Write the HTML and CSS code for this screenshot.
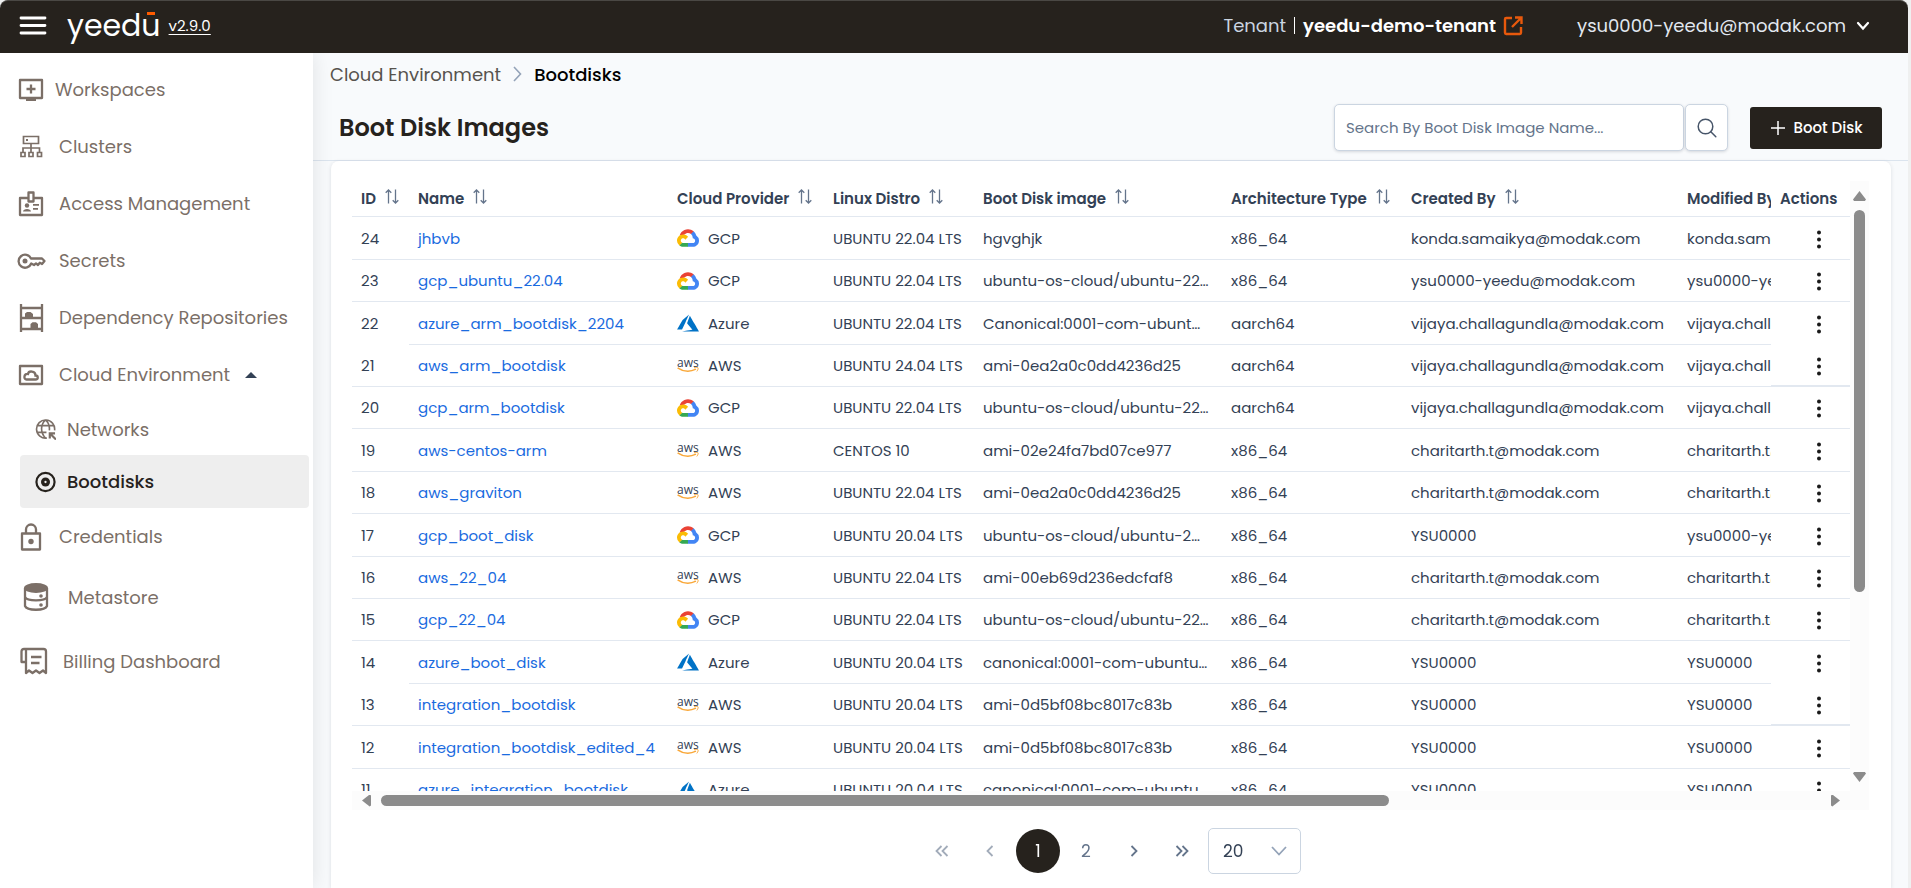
FILE: index.html
```html
<!DOCTYPE html>
<html lang="en">
<head>
<meta charset="utf-8">
<title>Boot Disk Images</title>
<link rel="stylesheet" href="styles.css">
</head>
<body>
<svg class="sprite" aria-hidden="true">
  <symbol id="gcp" viewBox="0 0 256 206"><path fill="#ea4335" d="M170.252 56.819l22.253-22.253 1.483-9.37C153.437-11.677 88.976-7.496 52.42 33.92 42.267 45.423 34.734 59.764 30.717 74.573l7.97-1.123 44.505-7.34 3.436-3.513c19.797-21.742 53.27-24.667 76.128-6.168z"/><path fill="#4285f4" d="M224.205 73.918a100.249 100.249 0 0 0-30.217-48.722l-31.232 31.232a55.515 55.515 0 0 1 20.379 44.037v5.544c15.35 0 27.797 12.445 27.797 27.796 0 15.352-12.446 27.485-27.797 27.485h-55.671l-5.466 5.934v33.34l5.466 5.231h55.67c39.93.311 72.553-31.494 72.864-71.424a72.303 72.303 0 0 0-31.793-60.453"/><path fill="#34a853" d="M71.87 205.796h55.593V161.29H71.87a27.275 27.275 0 0 1-11.4-2.498l-7.887 2.42-22.409 22.253-1.952 7.574c12.567 9.489 27.9 14.825 43.647 14.757"/><path fill="#fbbc05" d="M71.87 61.425C31.94 61.664-.237 94.228.001 134.158a72.301 72.301 0 0 0 28.222 56.88l32.248-32.246c-13.99-6.322-20.208-22.786-13.887-36.776 6.32-13.99 22.786-20.208 36.775-13.888a27.796 27.796 0 0 1 13.887 13.888l32.248-32.248A72.224 72.224 0 0 0 71.87 61.425"/></symbol>
  <symbol id="azure" viewBox="0 0 256 199"><path fill="#0072c6" d="M118.432 187.698c32.89-5.81 60.055-10.618 60.367-10.684l.568-.12-31.052-36.935c-17.078-20.314-31.051-37.014-31.051-37.11 0-.182 32.063-88.477 32.243-88.792.06-.105 21.88 37.567 52.893 91.32 29.035 50.323 52.973 91.815 53.195 92.203l.405.707-98.684-.012-98.684-.013zM0 176.435c0-.052 14.631-25.451 32.514-56.442l32.514-56.347 37.891-31.799C123.76 14.358 140.867.027 140.935.001c.069-.026-.205.664-.609 1.534-.404.87-18.919 40.582-41.145 88.25l-40.41 86.67-29.386.037z"/></symbol>
  <symbol id="smile" viewBox="0 0 22 6"><path d="M.6.8C6.500 4.900 13.500 4.900 19 2.200" fill="none" stroke="#f9a83a" stroke-width="1.500"/><path d="M17 .8c2-.5 3.600-.4 4 0s0 2.200-1.200 3.600" fill="none" stroke="#f9a83a" stroke-width="1"/></symbol>
  <symbol id="sort" viewBox="0 0 14 15"><path d="M3.500 14.500V1M.7 3.700 3.500 1l2.800 2.700M10.500.5V14M7.700 11.300l2.800 2.700 2.800-2.700" fill="none" stroke="currentColor" stroke-width="1.300"/></symbol>
  <symbol id="dots" viewBox="0 0 4 19"><circle cx="2" cy="2.500" r="2"/><circle cx="2" cy="9.500" r="2"/><circle cx="2" cy="16.500" r="2"/></symbol>
</svg>

<div class="app">
  <header class="topbar">
    <button class="menu" aria-label="Toggle menu"><svg width="28" height="20" viewBox="0 0 28 20"><path d="M2 2h24M2 9.500h24M2 17h24" stroke="#fff" stroke-width="2.800" stroke-linecap="round"/></svg></button>
    <a class="brand" href="#">yeedu</a>
    <a class="version" href="#">v2.9.0</a>
    <div class="tenant">
      <span class="tenant-label">Tenant</span>
      <strong class="tenant-name">yeedu-demo-tenant</strong>
      <button class="switch" aria-label="Switch tenant"><svg width="20" height="20" viewBox="0 0 20 20" fill="none" stroke="#e8590c" stroke-width="2.400"><path d="M9 2H3.200C2.500 2 2 2.500 2 3.200v13.600c0 .7.500 1.200 1.200 1.200h13.600c.7 0 1.200-.5 1.200-1.200V11M12 1.500h6.500V8M18 2 9 11"/></svg></button>
    </div>
    <button class="user">ysu0000-yeedu@modak.com<svg width="14" height="10" viewBox="0 0 14 10"><path d="m2 2 5 5.500L12 2" fill="none" stroke="#fff" stroke-width="2.200" stroke-linecap="round"/></svg></button>
  </header>

  <div class="body">
    <nav class="side" aria-label="Main">
      <a class="item snug" href="#"><svg class="ico" viewBox="0 0 26 26"><path d="M2 3h22v18H2z" class="l" stroke-linejoin="round"/><path d="M8 22h10v2H8z" class="f"/><path d="M13 7.500v9M8.500 12h9" class="l"/></svg>Workspaces</a>
      <a class="item" href="#"><svg class="ico" viewBox="0 0 26 26"><path class="t" d="M5.500 2.500h15v7h-15zM3 18.500h4v4H3zM11 18.500h4v4h-4zM19.500 18.500h4v4h-4zM13 10v8M5 18v-4h16.500v4"/><path class="f" d="M8 5h2v2H8z"/></svg>Clusters</a>
      <a class="item" href="#"><svg class="ico" viewBox="0 0 26 26"><path class="l" stroke-linejoin="round" d="M10 7H2v17h22V7h-8M10.500 1.500h5v9h-5z"/><circle class="f" cx="9" cy="14.500" r="2.200"/><path class="f" d="M5 20.500c0-3.500 8-3.500 8 0zM15 13h6v1.700h-6zM15 17h5v1.700h-5z"/></svg>Access Management</a>
      <a class="item" href="#"><svg class="ico wide" viewBox="0 0 29 26"><path class="l" stroke-linejoin="round" d="M14 10.500h11L27.500 13l-2.500 3-2.200-1.200L21 17l-2-1.600-2 1.600-2.800-1.500A6.500 6.500 0 1 1 14 10.500z"/><circle class="f" cx="8" cy="13" r="2.500"/></svg>Secrets</a>
      <a class="item" href="#"><svg class="ico" viewBox="0 0 26 28"><path class="l" d="M3 0v28M24 0v28M3 4h21M3 14h21M3 25h21"/><path class="f" d="M7 14V9.500L9 8h3.500L15 10v4zM12.500 24v-4l2-1.800h3.500l2 1.800v4z"/></svg>Dependency Repositories</a>
      <a class="item" href="#" aria-expanded="true"><svg class="ico" viewBox="0 0 26 26"><path class="l" stroke-linejoin="round" d="M2 4h22v18H2z"/><path class="l" d="M8.500 17.500h9c3 0 3-4 0-4 0-5-7-5-7.500-1.500-4.500-.5-4.500 5.500-1.500 5.500z"/></svg>Cloud Environment<svg class="caret" width="12" height="6" viewBox="0 0 12 6"><path d="M6 0 12 6H0z" fill="#334155"/></svg></a>
      <a class="item sub" href="#"><svg class="ico" viewBox="0 0 22 22"><path class="t" d="M12.500 20.500A9.500 9.500 0 1 1 20.500 12.500M2 7.500h18M2 14.500h10M11 1.500c-5.500 5-5.500 13 0 19M11 1.500c3.500 3 4.500 7 4 11"/><path class="l" d="m22 22-5.500-5.500M15.500 21v-5.500H21"/></svg>Networks</a>
      <a class="item sub active" href="#" aria-current="page"><svg class="ico" viewBox="0 0 22 22"><circle class="l" cx="11" cy="11" r="9.500"/><circle class="f" cx="11" cy="11" r="4.700"/><circle cx="11" cy="11" r="1.200" fill="#eee"/></svg>Bootdisks</a>
      <a class="item" href="#"><svg class="ico" viewBox="0 0 26 28"><path class="l" stroke-linejoin="round" d="M4 10.500h18v16H4zM8 11V6.500a5 5 0 0 1 10 0V11"/><circle class="f" cx="13" cy="18.500" r="2.700"/></svg>Credentials</a>
      <a class="item tall meta" href="#"><svg class="ico big" viewBox="0 0 26 30"><ellipse class="f" cx="13" cy="6" rx="12" ry="5"/><path class="l" d="M2 6v18c2 5 20 5 22 0V6M2 15c2 4.500 20 4.500 22 0"/><circle class="f" cx="18" cy="14" r="1.800"/><circle class="f" cx="18" cy="23" r="1.800"/></svg>Metastore</a>
      <a class="item tall bill" href="#"><svg class="ico big" viewBox="0 0 28 28"><path class="l" stroke-linejoin="round" d="M6 2h17.500c1.500 0 2.500 1 2.500 2.500V26l-3-2.500-3.500 2.500-3.500-2.500-3.500 2.500-3.500-2.500L6 26zM6 2H4C2.500 2 1.500 3 1.500 4.500V15H6M11 10h10.500M11 16h8.500"/></svg>Billing Dashboard</a>
    </nav>

    <main class="main">
      <div class="pagehead">
        <nav class="crumbs" aria-label="Breadcrumb"><a href="#">Cloud Environment</a><svg width="9" height="16" viewBox="0 0 9 16"><path d="m1 1 6.500 7L1 15" fill="none" stroke="#94a3b8" stroke-width="1.600"/></svg><span aria-current="page">Bootdisks</span></nav>
        <div class="titlebar">
          <h1>Boot Disk Images</h1>
          <form class="search" role="search">
            <input type="text" aria-label="Search by boot disk image name" placeholder="Search By Boot Disk Image Name...">
            <button type="button" aria-label="Search"><svg width="20" height="20" viewBox="0 0 20 20"><circle cx="8.500" cy="8.500" r="7.300" fill="none" stroke="#475569" stroke-width="1.500"/><path d="m13.800 13.800 5 5" stroke="#475569" stroke-width="1.500" stroke-linecap="round"/></svg></button>
          </form>
          <button class="add"><svg width="16" height="16" viewBox="0 0 16 16"><path d="M8 1v14M1 8h14" stroke="#fff" stroke-width="1.500"/></svg>Boot Disk</button>
        </div>
      </div>

      <section class="card">
        <div class="grid">
          <div class="scroller">
            <table>
              <colgroup><col class="c-id"><col class="c-name"><col class="c-cloud"><col class="c-distro"><col class="c-image"><col class="c-arch"><col class="c-by"><col class="c-by"><col class="c-act"></colgroup>
              <thead>
                <tr><th class="pin-l">ID<svg><use href="#sort"/></svg></th><th>Name<svg><use href="#sort"/></svg></th><th>Cloud Provider<svg><use href="#sort"/></svg></th><th>Linux Distro<svg><use href="#sort"/></svg></th><th>Boot Disk image<svg><use href="#sort"/></svg></th><th>Architecture Type<svg><use href="#sort"/></svg></th><th>Created By<svg><use href="#sort"/></svg></th><th>Modified By<svg><use href="#sort"/></svg></th><th class="pin-r">Actions</th></tr>
              </thead>
              <tbody>
                <tr><td class="pin-l">24</td><td><a href="#">jhbvb</a></td><td><span class="cloud"><svg><use href="#gcp"/></svg>GCP</span></td><td>UBUNTU 22.04 LTS</td><td>hgvghjk</td><td>x86_64</td><td>konda.samaikya@modak.com</td><td>konda.samaikya@modak.com</td><td class="pin-r"><button aria-label="Actions for 24"><svg><use href="#dots"/></svg></button></td></tr>
                <tr><td class="pin-l">23</td><td><a href="#">gcp_ubuntu_22.04</a></td><td><span class="cloud"><svg><use href="#gcp"/></svg>GCP</span></td><td>UBUNTU 22.04 LTS</td><td>ubuntu-os-cloud/ubuntu-22…</td><td>x86_64</td><td>ysu0000-yeedu@modak.com</td><td>ysu0000-yeedu@modak.com</td><td class="pin-r"><button aria-label="Actions for 23"><svg><use href="#dots"/></svg></button></td></tr>
                <tr class="joined"><td class="pin-l">22</td><td><a href="#">azure_arm_bootdisk_2204</a></td><td><span class="cloud"><svg><use href="#azure"/></svg>Azure</span></td><td>UBUNTU 22.04 LTS</td><td>Canonical:0001-com-ubunt…</td><td>aarch64</td><td>vijaya.challagundla@modak.com</td><td>vijaya.challagundla@modak.com</td><td class="pin-r"><button aria-label="Actions for 22"><svg><use href="#dots"/></svg></button></td></tr>
                <tr><td class="pin-l">21</td><td><a href="#">aws_arm_bootdisk</a></td><td><span class="cloud"><span class="aws">aws<svg><use href="#smile"/></svg></span>AWS</span></td><td>UBUNTU 24.04 LTS</td><td>ami-0ea2a0c0dd4236d25</td><td>aarch64</td><td>vijaya.challagundla@modak.com</td><td>vijaya.challagundla@modak.com</td><td class="pin-r"><button aria-label="Actions for 21"><svg><use href="#dots"/></svg></button></td></tr>
                <tr><td class="pin-l">20</td><td><a href="#">gcp_arm_bootdisk</a></td><td><span class="cloud"><svg><use href="#gcp"/></svg>GCP</span></td><td>UBUNTU 22.04 LTS</td><td>ubuntu-os-cloud/ubuntu-22…</td><td>aarch64</td><td>vijaya.challagundla@modak.com</td><td>vijaya.challagundla@modak.com</td><td class="pin-r"><button aria-label="Actions for 20"><svg><use href="#dots"/></svg></button></td></tr>
                <tr><td class="pin-l">19</td><td><a href="#">aws-centos-arm</a></td><td><span class="cloud"><span class="aws">aws<svg><use href="#smile"/></svg></span>AWS</span></td><td>CENTOS 10</td><td>ami-02e24fa7bd07ce977</td><td>x86_64</td><td>charitarth.t@modak.com</td><td>charitarth.t@modak.com</td><td class="pin-r"><button aria-label="Actions for 19"><svg><use href="#dots"/></svg></button></td></tr>
                <tr><td class="pin-l">18</td><td><a href="#">aws_graviton</a></td><td><span class="cloud"><span class="aws">aws<svg><use href="#smile"/></svg></span>AWS</span></td><td>UBUNTU 22.04 LTS</td><td>ami-0ea2a0c0dd4236d25</td><td>x86_64</td><td>charitarth.t@modak.com</td><td>charitarth.t@modak.com</td><td class="pin-r"><button aria-label="Actions for 18"><svg><use href="#dots"/></svg></button></td></tr>
                <tr><td class="pin-l">17</td><td><a href="#">gcp_boot_disk</a></td><td><span class="cloud"><svg><use href="#gcp"/></svg>GCP</span></td><td>UBUNTU 20.04 LTS</td><td>ubuntu-os-cloud/ubuntu-2…</td><td>x86_64</td><td>YSU0000</td><td>ysu0000-yeedu@modak.com</td><td class="pin-r"><button aria-label="Actions for 17"><svg><use href="#dots"/></svg></button></td></tr>
                <tr><td class="pin-l">16</td><td><a href="#">aws_22_04</a></td><td><span class="cloud"><span class="aws">aws<svg><use href="#smile"/></svg></span>AWS</span></td><td>UBUNTU 22.04 LTS</td><td>ami-00eb69d236edcfaf8</td><td>x86_64</td><td>charitarth.t@modak.com</td><td>charitarth.t@modak.com</td><td class="pin-r"><button aria-label="Actions for 16"><svg><use href="#dots"/></svg></button></td></tr>
                <tr><td class="pin-l">15</td><td><a href="#">gcp_22_04</a></td><td><span class="cloud"><svg><use href="#gcp"/></svg>GCP</span></td><td>UBUNTU 22.04 LTS</td><td>ubuntu-os-cloud/ubuntu-22…</td><td>x86_64</td><td>charitarth.t@modak.com</td><td>charitarth.t@modak.com</td><td class="pin-r"><button aria-label="Actions for 15"><svg><use href="#dots"/></svg></button></td></tr>
                <tr class="joined"><td class="pin-l">14</td><td><a href="#">azure_boot_disk</a></td><td><span class="cloud"><svg><use href="#azure"/></svg>Azure</span></td><td>UBUNTU 20.04 LTS</td><td>canonical:0001-com-ubuntu…</td><td>x86_64</td><td>YSU0000</td><td>YSU0000</td><td class="pin-r"><button aria-label="Actions for 14"><svg><use href="#dots"/></svg></button></td></tr>
                <tr><td class="pin-l">13</td><td><a href="#">integration_bootdisk</a></td><td><span class="cloud"><span class="aws">aws<svg><use href="#smile"/></svg></span>AWS</span></td><td>UBUNTU 20.04 LTS</td><td>ami-0d5bf08bc8017c83b</td><td>x86_64</td><td>YSU0000</td><td>YSU0000</td><td class="pin-r"><button aria-label="Actions for 13"><svg><use href="#dots"/></svg></button></td></tr>
                <tr><td class="pin-l">12</td><td><a href="#">integration_bootdisk_edited_4</a></td><td><span class="cloud"><span class="aws">aws<svg><use href="#smile"/></svg></span>AWS</span></td><td>UBUNTU 20.04 LTS</td><td>ami-0d5bf08bc8017c83b</td><td>x86_64</td><td>YSU0000</td><td>YSU0000</td><td class="pin-r"><button aria-label="Actions for 12"><svg><use href="#dots"/></svg></button></td></tr>
                <tr><td class="pin-l">11</td><td><a href="#">azure_integration_bootdisk</a></td><td><span class="cloud"><svg><use href="#azure"/></svg>Azure</span></td><td>UBUNTU 20.04 LTS</td><td>canonical:0001-com-ubuntu…</td><td>x86_64</td><td>YSU0000</td><td>YSU0000</td><td class="pin-r"><button aria-label="Actions for 11"><svg><use href="#dots"/></svg></button></td></tr>
              </tbody>
            </table>
          </div>
          <div class="vbar"><i class="up"></i><span class="track"><b></b></span><i class="down"></i></div>
          <div class="hbar"><i class="left"></i><span class="track"><b></b></span><i class="right"></i></div>
        </div>
        <nav class="pager" aria-label="Pagination">
          <button aria-label="First page" disabled><svg width="14" height="12" viewBox="0 0 14 12"><path d="M6.500 1 1.500 6l5 5M12.500 1l-5 5 5 5"/></svg></button>
          <button aria-label="Previous page" disabled><svg width="8" height="12" viewBox="0 0 8 12"><path d="M6.500 1 1.500 6l5 5"/></svg></button>
          <button class="on" aria-current="page">1</button>
          <button>2</button>
          <button aria-label="Next page"><svg width="8" height="12" viewBox="0 0 8 12"><path d="m1.500 1 5 5-5 5"/></svg></button>
          <button aria-label="Last page"><svg width="14" height="12" viewBox="0 0 14 12"><path d="m1.500 1 5 5-5 5M7.500 1l5 5-5 5"/></svg></button>
          <span class="size"><select aria-label="Rows per page"><option>20</option></select><svg width="16" height="10" viewBox="0 0 16 10"><path d="m1 1 7 7.500L15 1"/></svg></span>
        </nav>
      </section>
    </main>
  </div>
</div>
</body>
</html>
```
FILE: styles.css
```css
* { box-sizing: border-box; }
body { margin: 0; background: #eff0f0; font-family: Poppins, Inter, "Noto Sans", sans-serif; font-size: 15px; color: #334155; }
a { color: inherit; text-decoration: none; }
button { font: inherit; color: inherit; background: none; border: 0; padding: 0; display: inline-flex; align-items: center; justify-content: center; }
svg { flex: none; }
.sprite { display: none; }

.app { height: 100vh; margin-right: 3px; display: flex; flex-direction: column; overflow: hidden; }

.topbar { flex: none; height: 53px; padding: 0 38px 3px 18px; display: flex; align-items: center; background: #26221d; border-top: 1px solid #4a4844; border-radius: 8px 8px 0 0; color: #fff; font-size: 18px; }
.menu { width: 30px; }
.brand { position: relative; margin-left: 19px; font-size: 30px; line-height: 40px; }
.brand::after { content: ""; position: absolute; right: 6px; top: 6px; width: 8px; height: 3px; background: #ff5c00; }
.version { margin-left: 8px; font-size: 15px; text-decoration: underline; text-underline-offset: 3px; }
.tenant { margin-left: auto; display: flex; align-items: center; }
.tenant-label { padding-right: 8px; margin-right: 8px; line-height: 17px; border-right: 1px solid #fff; color: #cbd5e1; }
.tenant-name { font-weight: 600; }
.switch { margin-left: 7px; }
.user { margin-left: 54px; gap: 10px; color: #e2e8f0; }

.body { flex: 1; min-height: 0; display: flex; }
.side { position: relative; z-index: 1; flex: none; width: 313px; padding-top: 8px; background: #fff; box-shadow: 0 0 20px rgba(0, 0, 0, .1); clip-path: inset(0 -24px 0 0); display: flex; flex-direction: column; color: #7b6f67; font-size: 18px; }
.item { height: 57px; padding-left: 18px; display: flex; align-items: center; gap: 15px; }
.item.snug { gap: 11px; }
.item.tall { height: 64px; }
.item.meta { padding-left: 22px; gap: 18px; }
.item.bill { padding-left: 20px; }
.item.sub { height: 52px; margin: 0 4px 0 20px; padding-left: 15px; gap: 11px; border-radius: 4px; }
.item.active { height: 53px; background: #eee; color: #26221d; font-weight: 500; }
.ico { width: 26px; height: 28px; }
.wide { width: 29px; margin: 0 -2px 0 -1px; }
.big { width: 28px; height: 30px; }
.sub .ico { width: 21px; height: 22px; }
.l { fill: none; stroke: currentColor; stroke-width: 2.300; }
.t { fill: none; stroke: currentColor; stroke-width: 1.700; }
.f { fill: currentColor; }

.main { flex: 1; min-width: 0; display: flex; flex-direction: column; background: #f8fafc; }
.pagehead { flex: none; height: 108px; border-bottom: 1px solid #dbe4ee; }
.crumbs { height: 42px; padding-left: 17px; display: flex; align-items: center; gap: 12px; color: #57534e; font-size: 18px; }
.crumbs span { color: #000; font-weight: 500; }
.titlebar { height: 65px; padding: 0 26px; display: flex; align-items: center; }
h1 { margin: 0 auto 0 0; font-size: 24px; font-weight: 600; color: #26221d; }
.search { display: flex; gap: 1px; height: 47px; margin-right: 22px; }
.search input { width: 350px; padding: 0 11px; font: inherit; }
.search input::placeholder { color: #64748b; opacity: 1; }
.search input, .search button { border: 1px solid #cbd5e1; border-radius: 5px; background: #fff; box-shadow: 0 1px 3px rgba(15, 23, 42, .15); }
.search button { width: 43px; }
.add { height: 42px; width: 132px; gap: 8px; background: #26221d; color: #fff; border-radius: 3px; font-weight: 500; }

.card { flex: 1; min-height: 0; margin: 0 17px 0 18px; padding: 20px 22px 0 21px; display: flex; flex-direction: column; background: #fff; border-radius: 8px 8px 0 0; box-shadow: 0 1px 4px rgba(15, 23, 42, .12); }
.grid { flex: 1; min-height: 0; display: grid; grid-template: minmax(0, 1fr) 19px / minmax(0, 1fr) 19px; background: #fcfcfc; }
.scroller { overflow: auto; scrollbar-width: none; background: #fff; }
table { width: 1681px; table-layout: fixed; border-collapse: separate; border-spacing: 0; }
.c-id { width: 57px; }
.c-name { width: 259px; }
.c-cloud { width: 156px; }
.c-distro { width: 150px; }
.c-image { width: 248px; }
.c-arch { width: 180px; }
.c-by { width: 276px; }
.c-act { width: 79px; }
th, td { padding: 0 0 0 9px; text-align: left; white-space: nowrap; border-bottom: 1px solid #e2e8f0; }
th { height: 36px; font-weight: 600; }
th svg { width: 14px; height: 15px; margin-left: 9px; color: #64748b; }
td { height: 42px; }
tr:nth-child(5n+1) td, tr:nth-child(5n+3) td { height: 43px; }
td a { color: #1a6be0; }
.pin-l { position: sticky; left: 0; background: #fff; }
.pin-r { position: sticky; right: 0; background: #fff; }
td.pin-r { padding-left: 46px; }
td button { vertical-align: middle; }
td button svg { width: 4px; height: 19px; fill: #1a1a1a; display: block; }
.joined .pin-l, .joined .pin-r { border-bottom-color: #fff; }
.joined + tr .pin-r { border-bottom-width: 2px; }
.cloud { display: flex; align-items: center; gap: 9px; }
.cloud > svg { width: 22px; height: 18px; }
.aws { width: 22px; display: flex; flex-direction: column; font: 500 12px/9px "Open Sans", sans-serif; }
.aws svg { width: 22px; height: 6px; }

.vbar, .hbar { display: flex; align-items: center; }
.vbar { flex-direction: column; padding: 10px 0 9px; gap: 9px; }
.hbar { padding: 0 19px 0 10px; gap: 10px; }
.hbar { grid-column: 1 / -1; padding-right: 29px; }
.track { flex: 1; }
.track b { display: block; background: #8b8b8b; border-radius: 6px; }
.vbar .track b { width: 11px; height: 69%; }
.hbar .track b { width: 70%; height: 11px; }
.up, .down { width: 13px; height: 10px; background: #8b8b8b; clip-path: polygon(50% 0, 100% 85%, 92% 100%, 8% 100%, 0 85%); }
.down { clip-path: polygon(50% 100%, 100% 15%, 92% 0, 8% 0, 0 15%); }
.left, .right { width: 9px; height: 12px; background: #8b8b8b; clip-path: polygon(0 50%, 85% 0, 100% 8%, 100% 92%, 85% 100%); }
.right { clip-path: polygon(100% 50%, 15% 0, 0 8%, 0 92%, 15% 100%); }

.pager { flex: none; height: 78px; padding-top: 4px; display: flex; align-items: center; justify-content: center; gap: 4px; font-size: 17px; color: #64748b; }
.pager button { width: 44px; height: 44px; border-radius: 50%; }
.pager button:disabled { opacity: .6; }
.pager .on { background: #26221d; color: #fff; }
.pager svg path { fill: none; stroke: #64748b; stroke-width: 1.800; }
.size { position: relative; }
.size select { appearance: none; width: 93px; height: 46px; padding: 0 14px; border: 1px solid #cbd5e1; border-radius: 5px; background: #fff; font: inherit; font-size: 17px; color: #334155; }
.size svg { position: absolute; right: 14px; top: 18px; pointer-events: none; }
.pager .size svg path { stroke: #94a3b8; }
```
